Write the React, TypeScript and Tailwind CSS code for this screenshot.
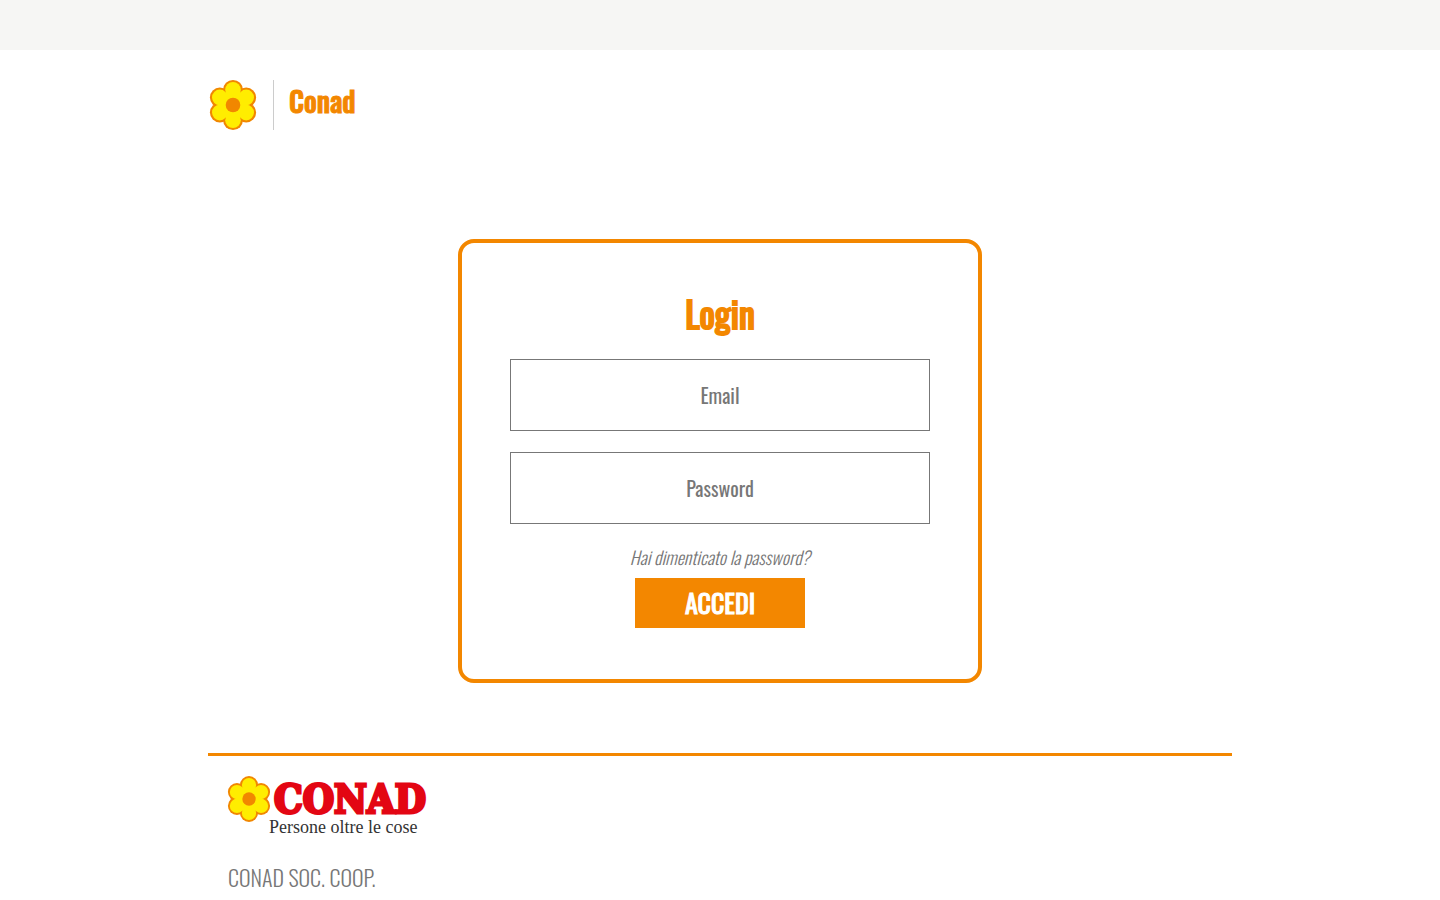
const condensed = "font-['Oswald','Liberation_Sans_Narrow','Liberation_Sans',sans-serif]";

const petals = [
  [23, 9.8],
  [36.2, 17.4],
  [36.2, 32.6],
  [23, 40.2],
  [9.8, 32.6],
  [9.8, 17.4],
];

function Flower({ className }: { className: string }) {
  return (
    <svg viewBox="0 0 46 50" className={className} aria-hidden="true">
      {petals.map(([x, y]) => (
        <circle key={`${x}-${y}`} cx={x} cy={y} r="9.9" fill="#f18700" />
      ))}
      {petals.map(([x, y]) => (
        <circle key={`${x}-${y}`} cx={x} cy={y} r="7.8" fill="#ffed00" />
      ))}
      <circle cx="23" cy="25" r="14.5" fill="#ffed00" />
      <circle cx="23" cy="25" r="7.3" fill="#f18700" />
    </svg>
  );
}

export default function App() {
  return (
    <div className={`min-h-screen overflow-x-hidden bg-white text-[#777777] ${condensed}`}>
      <div className="h-[50px] bg-[#f6f6f4]" />
      <div className="mx-auto max-w-[1024px]">
        <header className="flex h-[80px] items-end pl-0.5">
          <Flower className="h-[50px] w-[46px] overflow-visible" />
          <div className="ml-[17px] h-[50px] border-l border-[#cccccc] pl-[15px]">
            <h1 className="text-[28px] leading-[42px] font-medium text-[#f38700] [-webkit-text-stroke:1px_#f38700]">
              Conad
            </h1>
          </div>
        </header>

        <main className="pt-[109px] pb-[70px]">
          <form
            onSubmit={(event) => event.preventDefault()}
            className="mx-auto flex w-full max-w-[524px] flex-col items-center rounded-[16px] border-4 border-[#f38700] px-12 pt-[42px] pb-[51px]"
          >
            <h2 className="text-[36px] leading-[56px] font-normal text-[#f38700] [-webkit-text-stroke:2px_#f38700]">
              Login
            </h2>
            <input
              type="email"
              aria-label="Email"
              placeholder="Email"
              className="mt-[18px] h-[72px] w-full border border-[#777777] text-center text-[20px] placeholder:text-[#777777]"
            />
            <input
              type="password"
              aria-label="Password"
              placeholder="Password"
              className="mt-[21px] h-[72px] w-full border border-[#777777] text-center text-[20px] placeholder:text-[#777777]"
            />
            <a href="#recupera" className="mt-5 text-[18px] leading-[26px] font-light italic">
              Hai dimenticato la password?
            </a>
            <button
              type="submit"
              className="mt-2 h-[50px] w-[170px] bg-[#f38700] text-[26px] leading-[50px] font-normal text-white [-webkit-text-stroke:1px_white]"
            >
              ACCEDI
            </button>
          </form>
        </main>

        <footer className="border-t-[3px] border-[#f38700] px-5 pt-5">
          <div className="flex h-[60px] items-start">
            <Flower className="h-[46px] w-[42px] overflow-visible" />
            <svg
              viewBox="0 0 160 60"
              className="h-[60px] w-[160px] overflow-visible"
              role="img"
              aria-label="Conad, Persone oltre le cose"
            >
              <text
                x="4"
                y="37"
                className="font-['DejaVu_Serif_Condensed','DejaVu_Serif',serif] text-[40px] font-bold"
                fill="#e30613"
                stroke="#e30613"
                strokeWidth="3"
              >
                CONAD
              </text>
              <text x="-1" y="57" className="font-['Liberation_Serif',serif] text-[18px]" fill="#333333">
                Persone oltre le cose
              </text>
            </svg>
          </div>
          <p className="mt-[22px] text-[22px] leading-[38px] font-light">CONAD SOC. COOP.</p>
        </footer>
      </div>
    </div>
  );
}
